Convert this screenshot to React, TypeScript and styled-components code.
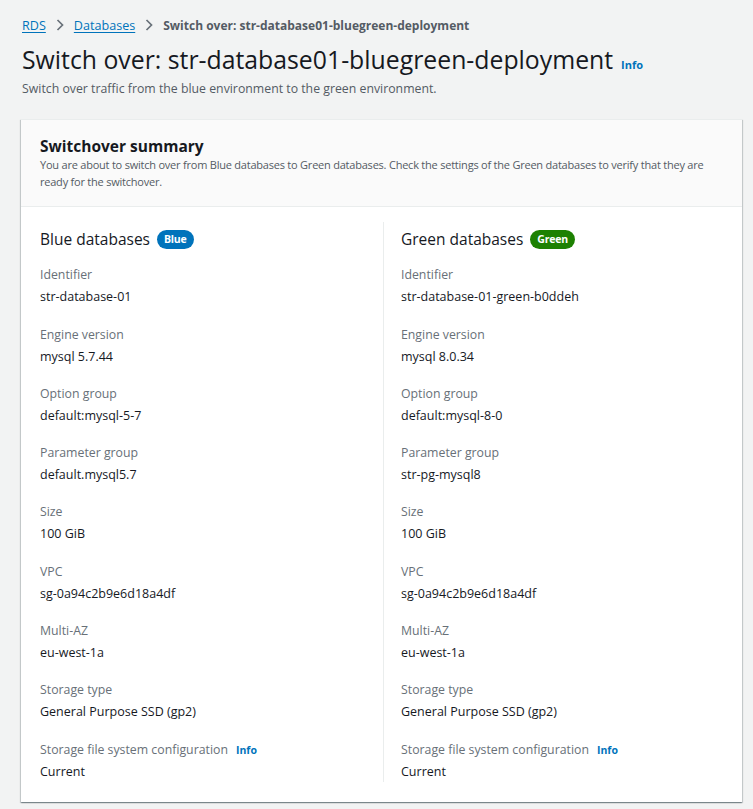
import React from "react";
import styled, { createGlobalStyle } from "styled-components";

const Global = createGlobalStyle`
  html, body { margin: 0; padding: 0; background: #f2f3f3; }
  body { font-family: "Open Sans", "Noto Sans", sans-serif; color: #16191f; -webkit-font-smoothing: antialiased; }
  * { box-sizing: border-box; }
`;

const Page = styled.div`
  padding: 15px 11px 8px 22px;
`;

const Crumbs = styled.nav`
  display: flex;
  align-items: center;
  gap: 9px;
  height: 20px;
  font-size: 12.6px;
`;

const CrumbLink = styled.a`
  color: #0073bb;
  text-decoration: underline;
  text-underline-offset: 2px;
`;

const CrumbCurrent = styled.span`
  color: #545b64;
  font-weight: 700;
  font-size: 12px;
`;

const Chevron = () => (
  <svg width="10" height="14" viewBox="0 0 10 14" fill="none">
    <path d="M2.5 2 L7.5 7 L2.5 12" stroke="#687078" strokeWidth="1.7" />
  </svg>
);

const TitleRow = styled.div`
  display: flex;
  align-items: baseline;
  gap: 8px;
  margin-top: 6px;
`;

const Title = styled.h1`
  margin: 0;
  font-size: 24.8px;
  font-weight: 400;
  line-height: 36px;
  color: #16191f;
`;

const Info = styled.a<{ $size?: number }>`
  color: #0073bb;
  font-weight: 700;
  font-size: ${(p) => p.$size ?? 11}px;
  text-decoration: none;
`;

const Subtitle = styled.p`
  margin: 2px 0 0;
  font-size: 12.3px;
  line-height: 20px;
  color: #545b64;
`;

const Card = styled.section`
  margin: 20px 0 0 -1px;
  background: #fff;
  border-top: 1px solid #eaeded;
  box-shadow: 0 1px 1px 0 rgba(0, 28, 36, 0.3), 1px 1px 1px 0 rgba(0, 28, 36, 0.15),
    -1px 1px 1px 0 rgba(0, 28, 36, 0.15);
`;

const CardHeader = styled.header`
  background: #fafafa;
  border-bottom: 1px solid #eaeded;
  padding: 16px 19px 16px 19px;
`;

const CardTitle = styled.h2`
  margin: 0;
  font-size: 15.5px;
  font-weight: 700;
  line-height: 20px;
  color: #16191f;
`;

const CardDesc = styled.p`
  margin: 0;
  font-size: 11px;
  letter-spacing: -0.22px;
  line-height: 17px;
  color: #545b64;
`;

const CardBody = styled.div`
  display: grid;
  grid-template-columns: 343px 1fr;
  padding: 15px 19px 20px 19px;
`;

const Column = styled.div<{ $divider?: boolean }>`
  display: flex;
  flex-direction: column;
  gap: 17.3px;
  padding-left: ${(p) => (p.$divider ? "17px" : "0")};
  border-left: ${(p) => (p.$divider ? "1px solid #eaeded" : "none")};
`;

const ColHeading = styled.h3`
  margin: 0 0 -8px;
  display: flex;
  align-items: center;
  gap: 7px;
  height: 34px;
  font-size: 15.5px;
  font-weight: 400;
  color: #16191f;
`;

const Badge = styled.span<{ $color: string }>`
  display: inline-flex;
  align-items: center;
  height: 19px;
  padding: 0 7px;
  border-radius: 10px;
  background: ${(p) => p.$color};
  color: #fff;
  font-size: 10.5px;
  font-weight: 700;
  letter-spacing: -0.2px;
`;

const Item = styled.div`
  display: flex;
  flex-direction: column;
  gap: 2px;
`;

const Label = styled.div`
  display: flex;
  align-items: center;
  gap: 8px;
  font-size: 12.3px;
  line-height: 20px;
  color: #687078;
`;

const Value = styled.div`
  font-size: 12.5px;
  line-height: 20px;
  color: #16191f;
`;

type Row = { label: string; value: string; info?: boolean };

const blue: Row[] = [
  { label: "Identifier", value: "str-database-01" },
  { label: "Engine version", value: "mysql 5.7.44" },
  { label: "Option group", value: "default:mysql-5-7" },
  { label: "Parameter group", value: "default.mysql5.7" },
  { label: "Size", value: "100 GiB" },
  { label: "VPC", value: "sg-0a94c2b9e6d18a4df" },
  { label: "Multi-AZ", value: "eu-west-1a" },
  { label: "Storage type", value: "General Purpose SSD (gp2)" },
  { label: "Storage file system configuration", value: "Current", info: true },
];

const green: Row[] = [
  { label: "Identifier", value: "str-database-01-green-b0ddeh" },
  { label: "Engine version", value: "mysql 8.0.34" },
  { label: "Option group", value: "default:mysql-8-0" },
  { label: "Parameter group", value: "str-pg-mysql8" },
  { label: "Size", value: "100 GiB" },
  { label: "VPC", value: "sg-0a94c2b9e6d18a4df" },
  { label: "Multi-AZ", value: "eu-west-1a" },
  { label: "Storage type", value: "General Purpose SSD (gp2)" },
  { label: "Storage file system configuration", value: "Current", info: true },
];

const DbColumn = ({
  title,
  badge,
  color,
  rows,
  divider,
}: {
  title: string;
  badge: string;
  color: string;
  rows: Row[];
  divider?: boolean;
}) => (
  <Column $divider={divider}>
    <ColHeading>
      {title}
      <Badge $color={color}>{badge}</Badge>
    </ColHeading>
    {rows.map((r) => (
      <Item key={r.label}>
        <Label>
          {r.label}
          {r.info && <Info $size={10.5}>Info</Info>}
        </Label>
        <Value>{r.value}</Value>
      </Item>
    ))}
  </Column>
);

export default function App() {
  return (
    <Page>
      <Global />
      <Crumbs>
        <CrumbLink>RDS</CrumbLink>
        <Chevron />
        <CrumbLink>Databases</CrumbLink>
        <Chevron />
        <CrumbCurrent>Switch over: str-database01-bluegreen-deployment</CrumbCurrent>
      </Crumbs>
      <TitleRow>
        <Title>Switch over: str-database01-bluegreen-deployment</Title>
        <Info>Info</Info>
      </TitleRow>
      <Subtitle>Switch over traffic from the blue environment to the green environment.</Subtitle>
      <Card>
        <CardHeader>
          <CardTitle>Switchover summary</CardTitle>
          <CardDesc>
            You are about to switch over from Blue databases to Green databases. Check the settings of the
            Green databases to verify that they are ready for the switchover.
          </CardDesc>
        </CardHeader>
        <CardBody>
          <DbColumn title="Blue databases" badge="Blue" color="#0073bb" rows={blue} />
          <DbColumn title="Green databases" badge="Green" color="#1d8102" rows={green} divider />
        </CardBody>
      </Card>
    </Page>
  );
}
